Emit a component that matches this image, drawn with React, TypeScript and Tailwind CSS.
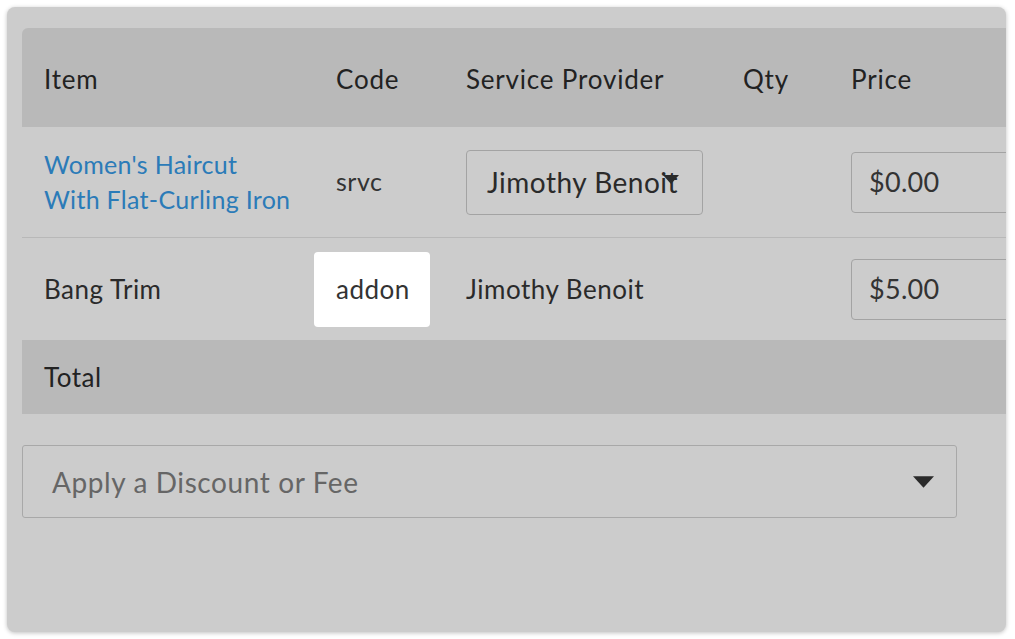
import React from "react";

const font = { fontFamily: "Lato, 'Open Sans', sans-serif" };

const Caret = ({ className }: { className?: string }) => (
  <svg viewBox="0 0 20 11" className={className} aria-hidden="true">
    <path d="M0 0 H20 L10 11 Z" fill="#2a2a2a" />
  </svg>
);

const cols = "grid grid-cols-[292px_130px_277px_108px_1fr]";

export default function App() {
  return (
    <div className="min-h-screen bg-white p-[7px]" style={font}>
      <div className="w-[999px] h-[625px] bg-[#cccccc] rounded-lg shadow-[0_1px_4px_rgba(0,0,0,0.25)] overflow-hidden pl-[15px] pt-[21px]">
        <div className="w-[1000px]">
          {/* header */}
          <div className={`${cols} h-[99px] pt-[4px] items-center bg-[#b9b9b9] rounded-tl-md text-[26px] tracking-[0.8px] text-[#222]`}>
            <div className="pl-[22px]">Item</div>
            <div className="pl-[22px]">Code</div>
            <div className="pl-[22px]">Service Provider</div>
            <div className="pl-[22px]">Qty</div>
            <div className="pl-[22px]">Price</div>
          </div>

          {/* row 1 */}
          <div className={`${cols} h-[111px] items-center border-b border-[#b8b8b8] text-[#333]`}>
            <div className="pl-[22px] text-[25px] tracking-[0.3px] leading-[35px] text-[#2b7bb8]">
              Women's Haircut
              <br />
              With Flat-Curling Iron
            </div>
            <div className="pl-[22px] text-[25px] tracking-[0.5px]">srvc</div>
            <div className="pl-[22px]">
              <div className="relative w-[237px] h-[65px] border border-[#a3a3a3] rounded flex items-center pl-[20px] text-[28px] tracking-[0.5px] text-[#2a2a2a] overflow-hidden whitespace-nowrap">
                Jimothy Benoit
                <Caret className="absolute left-[196px] top-[24px] w-[16px] h-[9px]" />
              </div>
            </div>
            <div />
            <div className="pl-[22px]">
              <div className="w-[200px] h-[61px] border border-[#a3a3a3] rounded flex items-center pl-[17px] text-[27px] tracking-[0.3px] text-[#333]">
                $0.00
              </div>
            </div>
          </div>

          {/* row 2 */}
          <div className={`${cols} h-[102px] items-center text-[26px] tracking-[0.5px] text-[#2a2a2a]`}>
            <div className="pl-[22px]">Bang Trim</div>
            <div>
              <div className="w-[116px] h-[75px] bg-white rounded flex items-center pl-[22px] text-[#333]">addon</div>
            </div>
            <div className="pl-[22px]">Jimothy Benoit</div>
            <div />
            <div className="pl-[22px]">
              <div className="w-[200px] h-[61px] border border-[#a3a3a3] rounded flex items-center pl-[17px] text-[27px] tracking-[0.3px] text-[#333]">
                $5.00
              </div>
            </div>
          </div>

          {/* total */}
          <div className="h-[74px] flex items-center bg-[#b9b9b9] pl-[22px] text-[26px] tracking-[0.5px] text-[#222]">Total</div>
        </div>

        <div className="mt-[31px] w-[935px] h-[73px] border border-[#a8a8a8] rounded-[3px] flex items-center justify-between pl-[29px] pr-[22px]">
          <span className="text-[28px] tracking-[0.6px] text-[#666]">Apply a Discount or Fee</span>
          <Caret className="w-[21px] h-[12px]" />
        </div>
      </div>
    </div>
  );
}
